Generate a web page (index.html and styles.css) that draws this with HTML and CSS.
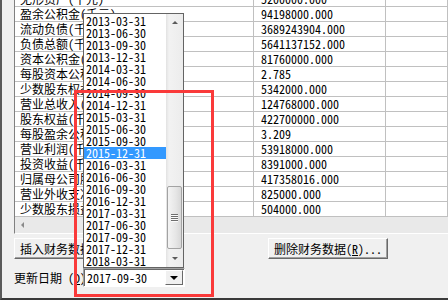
FILE: index.html
```html
<!DOCTYPE html>
<html lang="zh-CN">
<head>
    <meta charset="UTF-8">
    <meta name="viewport" content="width=device-width, initial-scale=1.0">
    <title>财务数据</title>
    <link rel="stylesheet" href="styles.css">
</head>
<body>
    <div class="dialog">
        <div class="grid">
            <div class="rows">
                <div class="row"><div class="cell name">无形资产(千元)</div><div class="cell value">5200000.000</div><div class="cell"></div></div>
                <div class="row"><div class="cell name">盈余公积金(千元)</div><div class="cell value">94198000.000</div><div class="cell"></div></div>
                <div class="row"><div class="cell name">流动负债(千元)</div><div class="cell value">3689243904.000</div><div class="cell"></div></div>
                <div class="row"><div class="cell name">负债总额(千元)</div><div class="cell value">5641137152.000</div><div class="cell"></div></div>
                <div class="row"><div class="cell name">资本公积金(千元)</div><div class="cell value">81760000.000</div><div class="cell"></div></div>
                <div class="row"><div class="cell name">每股资本公积金</div><div class="cell value">2.785</div><div class="cell"></div></div>
                <div class="row"><div class="cell name">少数股东权益(千元)</div><div class="cell value">5342000.000</div><div class="cell"></div></div>
                <div class="row"><div class="cell name">营业总收入(千元)</div><div class="cell value">124768000.000</div><div class="cell"></div></div>
                <div class="row"><div class="cell name">股东权益(千元)</div><div class="cell value">422700000.000</div><div class="cell"></div></div>
                <div class="row"><div class="cell name">每股盈余公积金</div><div class="cell value">3.209</div><div class="cell"></div></div>
                <div class="row"><div class="cell name">营业利润(千元)</div><div class="cell value">53918000.000</div><div class="cell"></div></div>
                <div class="row"><div class="cell name">投资收益(千元)</div><div class="cell value">8391000.000</div><div class="cell"></div></div>
                <div class="row"><div class="cell name">归属母公司股东净利润(千元)</div><div class="cell value">417358016.000</div><div class="cell"></div></div>
                <div class="row"><div class="cell name">营业外收支净额(千元)</div><div class="cell value">825000.000</div><div class="cell"></div></div>
                <div class="row"><div class="cell name">少数股东损益(千元)</div><div class="cell value">504000.000</div><div class="cell"></div></div>
            </div>
            <div class="hscroll"><span class="arrow-left"></span></div>
        </div>

        <div class="actions">
            <button class="btn">插入财务数据(<u>I</u>)...</button>
            <button class="btn">删除财务数据(<u>R</u>)...</button>
        </div>

        <div class="date-row">
            <label class="date-label">更新日期 (<u>D</u>)</label>
            <div class="combo">
                <span class="combo-text">2017-09-30</span>
                <span class="combo-btn"><span class="tri-down"></span></span>
            </div>
        </div>

        <!-- open drop-down of the date combo -->
        <div class="date-list">
            <div class="items" id="dateItems"></div>
            <div class="vscroll">
                <div class="sb-btn"><span class="tri-up small"></span></div>
                <div class="sb-track">
                    <div class="thumb"><span class="grip"></span></div>
                </div>
                <div class="sb-btn"><span class="tri-down small"></span></div>
            </div>
        </div>

        <div class="mark"></div>
    </div>

    <script>
        const dates = [
            '2013-03-31', '2013-06-30', '2013-09-30', '2013-12-31',
            '2014-03-31', '2014-06-30', '2014-09-30', '2014-12-31',
            '2015-03-31', '2015-06-30', '2015-09-30', '2015-12-31',
            '2016-03-31', '2016-06-30', '2016-09-30', '2016-12-31',
            '2017-03-31', '2017-06-30', '2017-09-30', '2017-12-31',
            '2018-03-31'
        ];
        const selected = '2015-12-31';

        document.getElementById('dateItems').innerHTML = dates.map(d => `
            <div class="item${d === selected ? ' selected' : ''}">${d}</div>
        `).join('');
    </script>
</body>
</html>
```

FILE: styles.css
```css
body {
    margin: 0;
    background-color: #f0f0f0;
    color: #000;
    font-family: "Noto Sans Mono CJK SC", "Noto Sans CJK SC", "Liberation Mono", monospace;
    font-size: 12px;
}
.dialog {
    position: relative;
    height: 300px;
    box-sizing: border-box;
    overflow: hidden;
    border-left: 2px solid #5a5a5a;
    border-bottom: 2px solid #3a3a3a;
}
.grid {
    margin-left: 12px;
    border-left: 1px solid #808080;
    border-bottom: 1px solid #ffffff;
    overflow: hidden;
}
.rows {
    margin-top: -8px;
    background-color: #fff;
}
.row {
    display: grid;
    grid-template-columns: 239px 132px 1fr;
    height: 15px;
    box-sizing: border-box;
    border-bottom: 1px solid #c0c0c0;
}
.cell {
    border-right: 1px solid #c0c0c0;
    line-height: 14px;
    white-space: nowrap;
    overflow: hidden;
}
.cell.name {
    padding-left: 5px;
}
.cell.value {
    padding-left: 7px;
}
.hscroll {
    height: 16px;
    background-color: #e9e9e9;
    display: flex;
    align-items: center;
    padding-left: 6px;
}
.arrow-left {
    width: 0;
    height: 0;
    border-top: 3px solid transparent;
    border-bottom: 3px solid transparent;
    border-right: 3px solid #8a8a8a;
}
.actions {
    display: flex;
    justify-content: space-between;
    margin: 4px 60px 0 12px;
}
.btn {
    width: 120px;
    height: 21px;
    padding: 0 0 0 5px;
    text-align: left;
    white-space: nowrap;
    font-family: inherit;
    font-size: 12px;
    line-height: 17px;
    color: #000;
    background-color: #f0f0f0;
    border: 1px solid;
    border-color: #ffffff #696969 #696969 #ffffff;
    box-shadow: inset -1px -1px #a0a0a0;
}
.btn u, .date-label u {
    text-decoration: underline;
}
.date-row {
    display: flex;
    align-items: center;
    margin: 9px 0 0 12px;
}
.date-label {
    width: 69px;
    flex-shrink: 0;
    white-space: nowrap;
    overflow: hidden;
}
.combo {
    display: flex;
    align-items: center;
    justify-content: space-between;
    width: 102px;
    height: 19px;
    box-sizing: border-box;
    background-color: #fff;
    border: 1px solid;
    border-color: #a0a0a0 #ffffff #ffffff #a0a0a0;
    box-shadow: inset 1px 1px #696969;
}
.combo-text {
    padding-left: 3px;
    line-height: 15px;
}
.combo-btn {
    display: flex;
    align-items: center;
    justify-content: center;
    width: 18px;
    height: 15px;
    margin-right: 1px;
    box-sizing: border-box;
    background-color: #f0f0f0;
    border: 1px solid;
    border-color: #ffffff #696969 #696969 #ffffff;
}
.tri-down {
    width: 0;
    height: 0;
    border-left: 4px solid transparent;
    border-right: 4px solid transparent;
    border-top: 4px solid #000;
}
.tri-up {
    width: 0;
    height: 0;
    border-left: 4px solid transparent;
    border-right: 4px solid transparent;
    border-bottom: 4px solid #000;
}
.tri-up.small {
    border-left-width: 3px;
    border-right-width: 3px;
    border-bottom: 3px solid #5a5a5a;
}
.tri-down.small {
    border-left-width: 3px;
    border-right-width: 3px;
    border-top: 3px solid #5a5a5a;
}
.date-list {
    position: absolute;
    left: 81px;
    top: 13px;
    width: 101px;
    height: 255px;
    box-sizing: border-box;
    display: flex;
    background-color: #fff;
    border: 1px solid #646464;
}
.items {
    width: 82px;
    padding-top: 1px;
}
.item {
    height: 12px;
    line-height: 12px;
    padding-left: 2px;
    white-space: nowrap;
}
.item.selected {
    background-color: #3399ff;
    color: #fff;
}
.vscroll {
    width: 17px;
    display: flex;
    flex-direction: column;
    background: linear-gradient(to right, #e2e2e2, #f2f2f2 3px, #ececec);
}
.sb-btn {
    height: 17px;
    display: flex;
    align-items: center;
    justify-content: center;
}
.sb-track {
    flex: 1;
    padding-top: 155px;
}
.thumb {
    height: 63px;
    margin: 0 1px;
    box-sizing: border-box;
    display: flex;
    align-items: center;
    justify-content: center;
    border: 1px solid #a3a3a3;
    border-radius: 2px;
    background: linear-gradient(to right, #f4f4f4, #e6e6e6 60%, #d8d8d8);
}
.grip {
    width: 7px;
    height: 8px;
    background: repeating-linear-gradient(#6e6e6e 0 1px, #fbfbfb 1px 2px);
}
.mark {
    position: absolute;
    left: 72px;
    top: 90px;
    width: 140px;
    height: 207px;
    box-sizing: border-box;
    border: 3px solid #fa3a3a;
}
```
